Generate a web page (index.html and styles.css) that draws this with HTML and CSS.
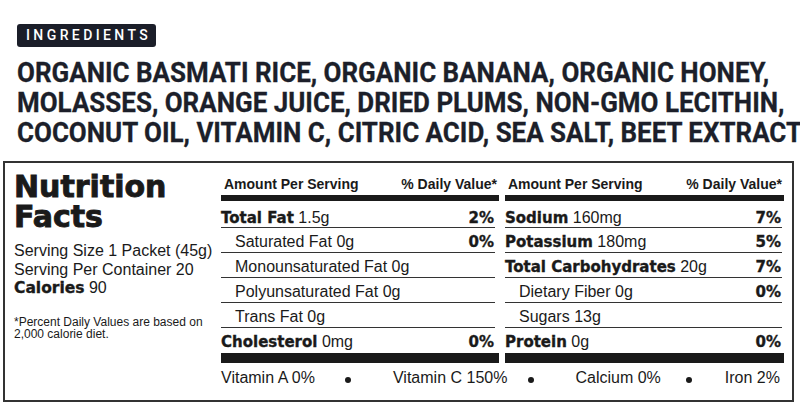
FILE: index.html
```html
<!DOCTYPE html>
<html>
<head>
<meta charset="utf-8">
<link rel="stylesheet" href="styles.css">
</head>
<body>
<div class="ingredients">
  <div class="badge">INGREDIENTS</div>
  <div class="ing-text">
    <div class="ing-line">ORGANIC BASMATI RICE, ORGANIC BANANA, ORGANIC HONEY,</div>
    <div class="ing-line">MOLASSES, ORANGE JUICE, DRIED PLUMS, NON-GMO LECITHIN,</div>
    <div class="ing-line">COCONUT OIL, VITAMIN C, CITRIC ACID, SEA SALT, BEET EXTRACT</div>
  </div>
</div>
<div class="panel">
  <div class="facts">
    <div class="title">Nutrition<br>Facts</div>
    <div class="serving">Serving Size 1 Packet (45g)<br>Serving Per Container 20<br><b class="heavy cal">Calories</b> 90</div>
    <div class="note">*Percent Daily Values are based on<br>2,000 calorie diet.</div>
  </div>
  <div class="values">
    <div class="tables">
      <div class="table table-left">
        <div class="head"><span>Amount Per Serving</span><span>% Daily Value*</span></div>
        <div class="bar-top"></div>
        <div class="row first"><span><b class="heavy">Total Fat</b> 1.5g</span><b class="heavy pct">2%</b></div>
        <div class="row sub"><span>Saturated Fat 0g</span><b class="heavy pct">0%</b></div>
        <div class="row sub"><span>Monounsaturated Fat 0g</span></div>
        <div class="row sub"><span>Polyunsaturated Fat 0g</span></div>
        <div class="row sub"><span>Trans Fat 0g</span></div>
        <div class="row last"><span><b class="heavy">Cholesterol</b> 0mg</span><b class="heavy pct">0%</b></div>
        <div class="bar-bottom"></div>
      </div>
      <div class="table table-right">
        <div class="head"><span>Amount Per Serving</span><span>% Daily Value*</span></div>
        <div class="bar-top"></div>
        <div class="row first"><span><b class="heavy">Sodium</b> 160mg</span><b class="heavy pct">7%</b></div>
        <div class="row"><span><b class="heavy">Potassium</b> 180mg</span><b class="heavy pct">5%</b></div>
        <div class="row"><span><b class="heavy">Total Carbohydrates</b> 20g</span><b class="heavy pct">7%</b></div>
        <div class="row sub"><span>Dietary Fiber 0g</span><b class="heavy pct">0%</b></div>
        <div class="row sub"><span>Sugars 13g</span></div>
        <div class="row last"><span><b class="heavy">Protein</b> 0g</span><b class="heavy pct">0%</b></div>
        <div class="bar-bottom"></div>
      </div>
    </div>
    <div class="vitamins">
      <span class="vit">Vitamin A 0%</span>
      <i class="dot dot-1"></i>
      <span class="vit vit-c">Vitamin C 150%</span>
      <i class="dot dot-2"></i>
      <span class="vit vit-ca">Calcium 0%</span>
      <i class="dot dot-3"></i>
      <span class="vit vit-fe">Iron 2%</span>
    </div>
  </div>
</div>
</body>
</html>
```
FILE: styles.css
```css
html, body {
  margin: 0;
  padding: 0;
}
body {
  width: 800px;
  height: 405px;
  overflow: hidden;
  background: #ffffff;
  font-family: "Liberation Sans", Arial, sans-serif;
  color: #1a1a1a;
}

/* Ingredients */
.ingredients {
  height: 161px;
  box-sizing: border-box;
  padding: 24px 0 0 17px;
  color: #1c1f2a;
  font-family: Roboto, sans-serif;
}
.badge {
  display: inline-block;
  height: 23px;
  line-height: 23px;
  padding: 0 5px 0 9px;
  background: #1b1e29;
  color: #ffffff;
  border-radius: 3px;
  font-size: 14px;
  font-weight: 500;
  letter-spacing: 3.4px;
}
.ing-text {
  margin-top: 11px;
  font-size: 28px;
  font-weight: 700;
  line-height: 30px;
  white-space: nowrap;
  transform: scaleX(0.927);
  transform-origin: 0 0;
  -webkit-text-stroke: 0.3px #1c1f2a;
}

/* Panel */
.panel {
  margin-left: 3px;
  width: 791px;
  height: 241px;
  box-sizing: border-box;
  border: 2px solid #333333;
  display: flex;
  padding: 0 8px 0 9px;
}
.heavy {
  font-family: "DejaVu Sans", sans-serif;
  font-weight: 700;
  -webkit-text-stroke: 0.35px #1a1a1a;
}
.facts {
  width: 207px;
  flex: none;
  padding-top: 9px;
}
.title {
  font-family: "DejaVu Sans", sans-serif;
  font-weight: 700;
  font-size: 30px;
  line-height: 29.5px;
  -webkit-text-stroke: 0.9px #1a1a1a;
}
.serving {
  margin-top: 11px;
  font-size: 16px;
  line-height: 18.5px;
}
.serving .cal {
  font-size: 15.5px;
}
.note {
  margin-top: 18px;
  font-size: 12px;
  line-height: 12.5px;
}

.values {
  width: 563px;
  flex: none;
}
.tables {
  display: grid;
  grid-template-columns: 278px 279px;
  column-gap: 6px;
}
.head {
  display: flex;
  justify-content: space-between;
  padding: 13px 2px 0 3px;
  font-size: 14px;
  font-weight: 700;
  line-height: 16px;
}
.bar-top {
  height: 6px;
  margin-top: 3px;
  background: #1a1a1a;
}
.row {
  display: flex;
  justify-content: space-between;
  align-items: baseline;
  box-sizing: border-box;
  height: 25px;
  padding-top: 5px;
  border-bottom: 1px solid #333333;
  font-size: 16px;
  line-height: 18px;
  white-space: nowrap;
}
.table-left .row {
  margin-right: 4px;
}
.table-right .row {
  margin-right: 2px;
}
.row.first {
  height: 27px;
  padding-top: 8px;
}
.row.last {
  border-bottom: none;
}
.row.sub {
  padding-left: 14px;
}
.row .heavy {
  font-size: 15px;
}
.row .pct {
  font-size: 15px;
  padding-right: 1px;
}
.bar-bottom {
  height: 10px;
  background: #1a1a1a;
}

.vitamins {
  display: flex;
  align-items: center;
  margin-top: 6px;
  font-size: 16px;
  line-height: 18px;
  white-space: nowrap;
}
.dot {
  width: 6px;
  height: 6px;
  margin-top: 4px;
  border-radius: 50%;
  background: #1a1a1a;
}
.dot-1 { margin-left: 30px; }
.vit-c { margin-left: 42px; }
.dot-2 { margin-left: 21px; }
.vit-ca { margin-left: 41px; }
.dot-3 { margin-left: 25px; }
.vit-fe { margin-left: 33px; }
```
